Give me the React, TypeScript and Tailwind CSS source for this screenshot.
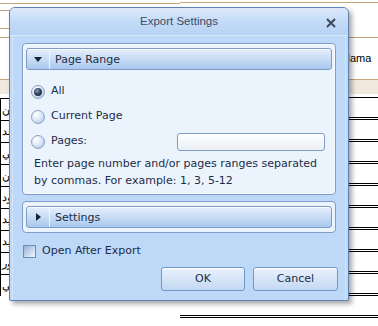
import React from 'react';

const LEFT_NAMES = ['الرحمن', 'محمد', 'بن علي', 'حسن', 'محمود', 'الرشيد', 'سعيد', 'نور', 'علي'];

const Radio = ({ checked }: { checked?: boolean }) => (
    <span className="w-[14px] h-[14px] rounded-full border border-[#8aa2c2] bg-[radial-gradient(circle_at_35%_30%,#ffffff_0%,#dfe9f7_45%,#9fb9dc_100%)] flex items-center justify-center shrink-0">
        {checked && (
            <span className="w-[8px] h-[8px] rounded-full bg-[radial-gradient(circle_at_40%_35%,#8fa3c0_0%,#34465f_45%,#0e1a2c_100%)]" />
        )}
    </span>
);

const SectionHeader = ({ label, open }: { label: string; open?: boolean }) => (
    <div className="h-[22px] flex items-center rounded-[3px] border border-[#7d9dc7] bg-gradient-to-b from-[#e6effb] via-[#c9dcf4] to-[#a9c8ee] shadow-[inset_0_1px_0_rgba(255,255,255,0.8)]">
        <div className="w-[22px] flex items-center justify-center">
            {open ? (
                <svg width="8" height="5" viewBox="0 0 8 5"><path d="M0 0H8L4 5Z" fill="#15243a" /></svg>
            ) : (
                <svg width="5" height="8" viewBox="0 0 5 8"><path d="M0 0V8L5 4Z" fill="#15243a" /></svg>
            )}
        </div>
        <div className="w-px h-[20px] bg-[#a7c1e2] border-r border-[#f1f6fd]" />
        <span className="ml-[5px] text-[11px] text-[#1b2d47] translate-y-[1px]">{label}</span>
    </div>
);

const Background = () => (
    <div className="absolute inset-0 flex font-['Liberation_Sans',sans-serif] text-[11px] text-black">
        {/* left column */}
        <div className="w-[180px] flex flex-col">
            <div className="h-[3px]" />
            <div className="h-[7px] border-t border-[#c4a47c]" />
            <div className="h-[18px] border-t border-[#c4a47c]" />
            <div className="h-[9px] border-t border-[#c4a47c]" />
            <div className="h-[42px] border-t border-[#c4a47c]" />
            <div className="h-[15px] border-t border-[#c4a47c] bg-[#f1e9de]" />
            <div className="h-[4px]" />
            {LEFT_NAMES.map((n) => (
                <div key={n} className="h-[22px] border-t border-l border-black flex items-center pl-[1px]" dir="rtl">
                    <span className="w-full text-left">{n}</span>
                </div>
            ))}
        </div>
        {/* right column */}
        <div className="flex-1 flex flex-col">
            <div className="h-[2px]" />
            <div className="h-[35px] border-t border-[#c4a47c]" />
            <div className="h-[42px] border-t border-[#c4a47c] flex items-center pl-[162px]">Nama</div>
            <div className="h-[15px] border-t border-[#c4a47c] bg-[#f1e9de]" />
            <div className="h-[3px]" />
            <div className="h-[1px] bg-black" />
            {Array.from({ length: 10 }).map((_, i) => (
                <div key={i} className="h-[22px] border-b-[3px] border-double border-black" />
            ))}
        </div>
    </div>
);

export default function App() {
    return (
        <div className="relative w-[378px] h-[326px] bg-white overflow-hidden">
            <Background />

            {/* dialog */}
            <div className="absolute left-[9px] top-[7px] w-[340px] h-[294px] flex flex-col border border-[#5f83b0] rounded-t-[6px] rounded-b-[2px] bg-[#bed9f8] shadow-[3px_3px_5px_rgba(0,0,0,0.35)] font-['DejaVu_Sans',sans-serif] overflow-hidden">
                {/* title bar */}
                <div className="h-[28px] relative flex items-center justify-center bg-gradient-to-b from-[#dce9fa] via-[#c4dbf7] to-[#b7d2f5] border-b border-[#d9e8fb]">
                    <span className="font-['Liberation_Sans',sans-serif] text-[11.5px] text-[#3a4d68]">Export Settings</span>
                    <svg className="absolute right-[12px] top-[10px]" width="10" height="10" viewBox="0 0 10 10">
                        <path d="M1 1L9 9M9 1L1 9" stroke="#3d4a5c" strokeWidth="2" />
                    </svg>
                </div>

                {/* body */}
                <div className="flex-1 flex flex-col mx-[2px] border-x border-[#d5e5f9] px-[9px] pt-[7px] pb-[9px]">
                    {/* Page Range group */}
                    <div className="rounded-[4px] border border-[#7f9dc6] bg-[#ebf3fd] p-[3px] pt-[4px] shadow-[inset_0_0_0_1px_#f7fbff]">
                        <SectionHeader label="Page Range" open />
                        <div className="flex flex-col pl-[5px] pr-[7px] pt-[9px] pb-[2px] text-[11px] text-[#1b2d47]">
                            <div className="h-[25px] flex items-center gap-[6px]">
                                <Radio checked />
                                <span>All</span>
                            </div>
                            <div className="h-[25px] flex items-center gap-[6px]">
                                <Radio />
                                <span>Current Page</span>
                            </div>
                            <div className="h-[25px] flex items-center gap-[6px]">
                                <Radio />
                                <span>Pages:</span>
                                <div className="ml-auto w-[148px] h-[18px] rounded-[3px] border border-[#7f9dc6] bg-gradient-to-b from-white to-[#eaeef3]" />
                            </div>
                            <p className="mt-[1px] pl-[3px] leading-[17px]">
                                Enter page number and/or pages ranges separated by commas. For example: 1, 3, 5-12
                            </p>
                        </div>
                    </div>

                    {/* Settings group */}
                    <div className="mt-[6px] rounded-[4px] border border-[#7f9dc6] bg-[#ebf3fd] p-[3px] pt-[4px] pb-[4px]">
                        <SectionHeader label="Settings" />
                    </div>

                    {/* open after export */}
                    <div className="mt-[10px] ml-[1px] flex items-center gap-[6px] text-[11px] text-[#1b2d47]">
                        <span className="w-[13px] h-[13px] border border-[#6f8db4] bg-gradient-to-br from-[#96afd6] to-[#f4f8fd]" />
                        <span>Open After Export</span>
                    </div>

                    {/* buttons */}
                    <div className="mt-auto -mr-[2px] flex justify-end gap-[8px]">
                        <button className="w-[84px] h-[24px] rounded-[3px] border border-[#6f98c9] bg-gradient-to-b from-[#eaf2fc] via-[#d6e5f7] to-[#c2d9f3] text-[11px] text-[#1b2d47] shadow-[inset_0_1px_0_#ffffff]">
                            OK
                        </button>
                        <button className="w-[85px] h-[24px] rounded-[3px] border border-[#6f98c9] bg-gradient-to-b from-[#eaf2fc] via-[#d6e5f7] to-[#c2d9f3] text-[11px] text-[#1b2d47] shadow-[inset_0_1px_0_#ffffff]">
                            Cancel
                        </button>
                    </div>
                </div>
            </div>
        </div>
    );
}
